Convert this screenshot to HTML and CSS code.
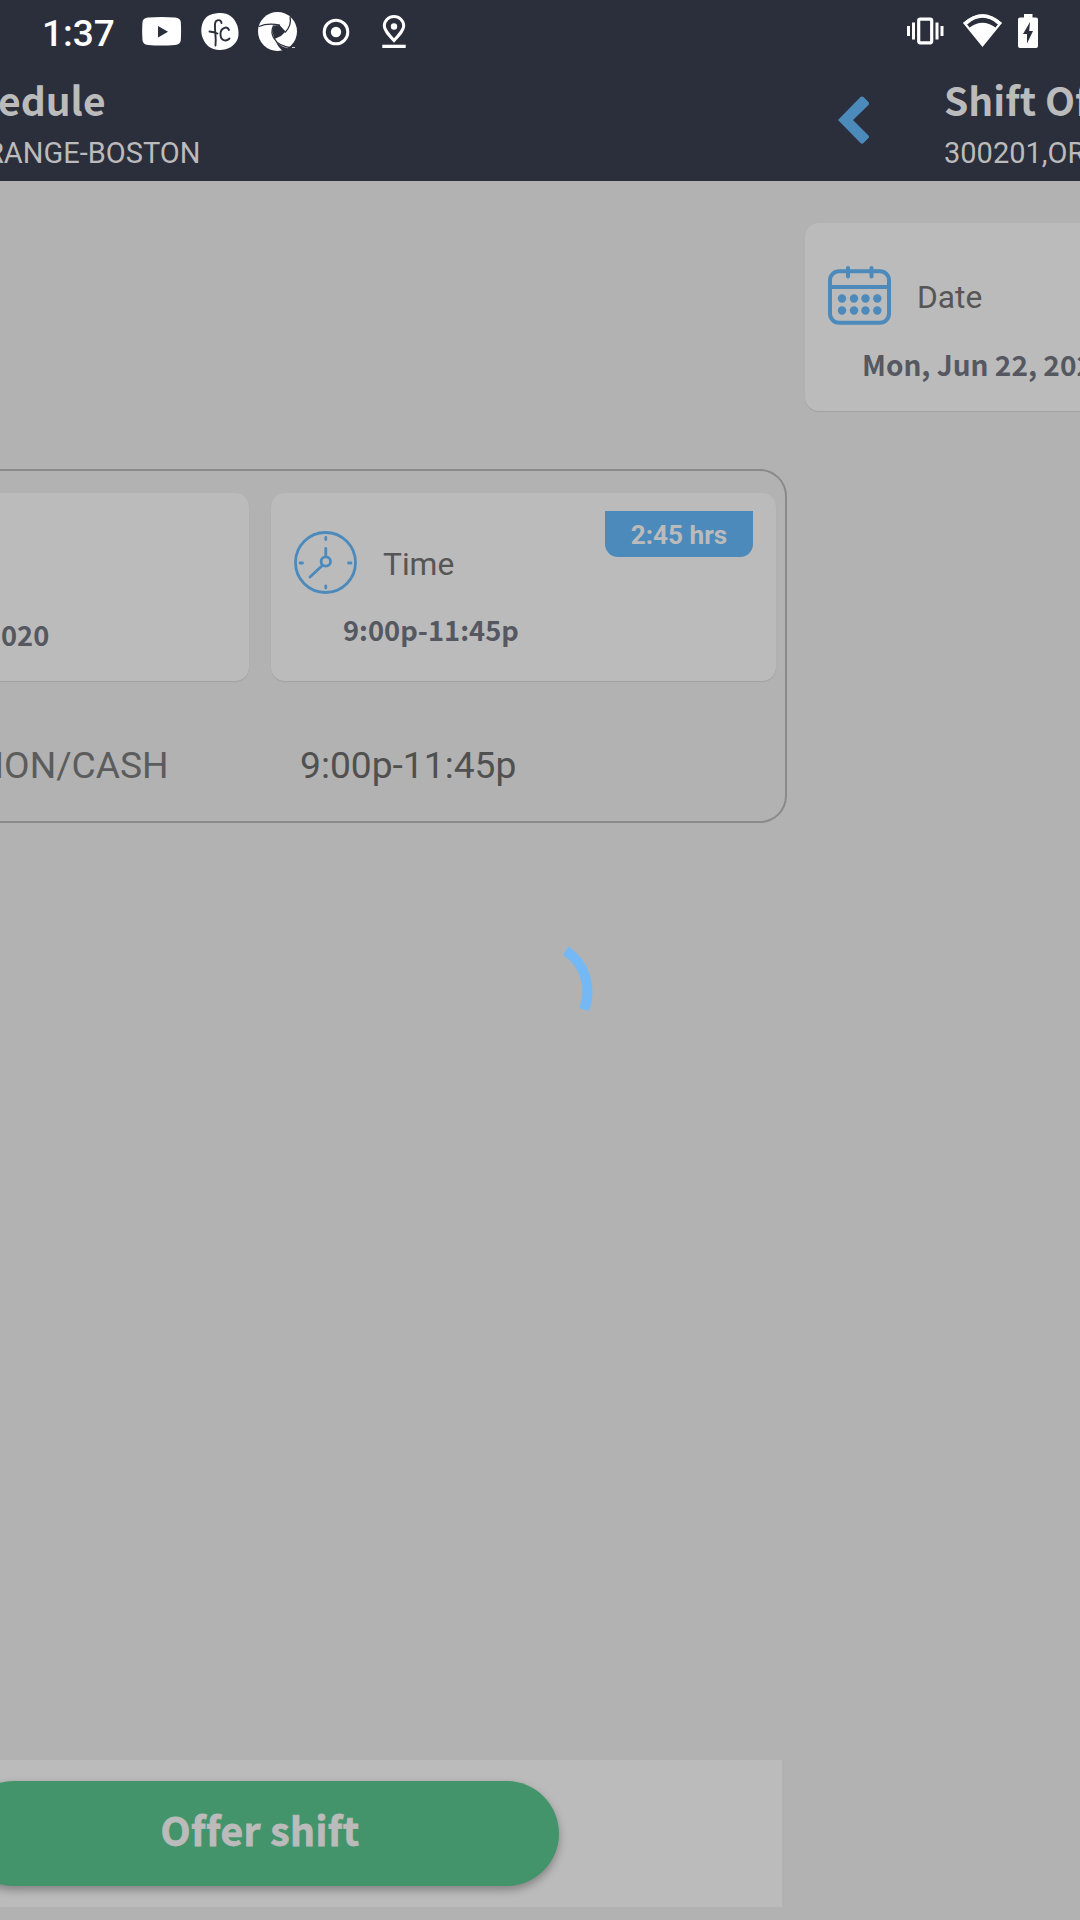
FILE: index.html
```html
<!DOCTYPE html>
<html lang="en">
<head>
<meta charset="utf-8">
<title>Shift Offer</title>
<link rel="stylesheet" href="styles.css">
</head>
<body>
<div class="status">
  <span class="clock">1:37</span>
  <div class="notifications">
    <svg viewBox="0 0 40 40"><path fill="#fff" fill-rule="evenodd" d="M6 5.500Q19.500 4.500 33 5.500Q38.500 6 38.800 10Q39.400 19 38.800 28Q38.500 32.500 33 33Q19.500 34 6 33Q.8 32.500.5 28Q-.2 19 .5 10Q.8 6 6 5.500zM16 14v11.500l10-5.700z"/></svg>
    <svg viewBox="0 0 40 40"><path fill="#fff" d="M17 1.200C27 0 34 4 37.500 14C40 24 38 30 31 35C24 39 14 39 8 34C2 28 0 20 2 13C4 6 8 2 17 1.200z"/><g fill="none" stroke="#2b2e3b" stroke-width="1.900" stroke-linecap="round"><path d="M21.500 11C21 7 15.500 7 15 12C14.500 19 16.500 25 15.500 33.500M9.500 19.500Q14 20 17.500 21.500M29 18C27 13.500 20.500 16 20.500 22C20.500 29 26 30 29.500 26.500"/></g></svg>
    <svg viewBox="0 0 40 40"><circle cx="19.500" cy="19.500" r="19.500" fill="#fff"/><path fill="#2b2e3b" d="M15.500 13.500L21.500 13L27.500 19.500L23 24L16.500 27L14.500 20z"/><g fill="none" stroke="#2b2e3b" stroke-width="1.300"><path d="M1 14.500Q10 10.500 22 13.200M32 5Q34 13 27 20.500M16.200 26.500Q20 34 34 36M16.500 27Q12 21 15.500 13.500"/></g><path fill="#2b2e3b" d="M17.500 28.500Q22 35 30 36L26 39.500Q20 36 17.500 28.500z"/><path stroke="#ccc" stroke-width="1" d="M34 35.500h3"/></svg>
    <svg viewBox="0 0 40 40"><circle cx="20" cy="20" r="11.800" fill="none" stroke="#fff" stroke-width="3"/><circle cx="20" cy="20" r="5.200" fill="#fff"/></svg>
    <svg viewBox="0 0 40 40"><path fill="none" stroke="#fff" stroke-width="3" d="M20 28.500C14 22 10.300 18 10.300 14A9.700 9.500 0 0 1 29.700 14C29.700 18 26 22 20 28.500z"/><circle cx="20" cy="14.500" r="3.200" fill="#fff"/><path fill="#fff" d="M8.300 32.700h23.400v3.300H8.300z"/></svg>
  </div>
  <div class="system">
    <svg class="vibrate" viewBox="0 0 40 40"><rect x="13.700" y="7.200" width="13" height="23.600" rx="1.500" fill="none" stroke="#fff" stroke-width="3.200"/><path fill="#fff" d="M2 14h3v10H2zM7 10.500h3v17H7zM30.500 10.500h3v17h-3zM35.500 14h3v10h-3z"/></svg>
    <svg class="wifi" viewBox="0 0 40 40"><path fill="#fff" d="M0 11Q19.500-6.500 39 11L19.500 35z"/><path fill="#2b2e3b" d="M3.800 12Q19.500-2 35.200 12L32.500 15.500Q19.500 6 6.500 15.500z"/><path fill="#fff" d="M0 11Q19.500-6.500 39 11L34.500 12.200Q19.500-.5 4.500 12.200z"/></svg>
    <svg class="battery" viewBox="0 0 20 34"><path fill="#fff" fill-rule="evenodd" d="M6 0h8.500v3.500H18q2 0 2 2V32q0 2-2 2H2q-2 0-2-2V5.500q0-2 2-2h4zM12 8L5 20h4v9.500L15 17h-3.800z"/></svg>
  </div>
</div>

<div class="screens">
  <section class="pane">
    <header class="bar bar-left">
      <h1 class="title">edule</h1>
      <p class="subtitle left-store">RANGE-BOSTON</p>
    </header>
    <main class="schedule">
      <div class="shift">
        <div class="cards">
          <article class="card card-date"><p class="value">020</p></article>
          <article class="card card-time">
            <div class="card-head">
              <svg class="icon" viewBox="0 0 63 63" fill="none" stroke="#4c8abc" stroke-width="2.800" stroke-linecap="round"><circle cx="31.500" cy="31.500" r="30"/><circle cx="31.800" cy="30.500" r="4.700"/><path d="M31.800 17.500v8M28.300 34.500L16 46M31.800 6.500v2M31.800 55v2M6 32h2.500M54.500 32H57"/></svg>
              <span class="label">Time</span>
              <span class="badge">2:45 hrs</span>
            </div>
            <p class="value">9:00p-11:45p</p>
          </article>
        </div>
        <div class="row"><span class="job"><span class="job-text">ION/CASH</span></span><span class="hours-range">9:00p-11:45p</span></div>
      </div>
    </main>
    <footer class="actions"><button class="offer">Offer shift</button></footer>
  </section>

  <section class="pane">
    <header class="bar bar-right">
      <svg class="back" viewBox="0 0 31 48"><path fill="#4c8abc" d="M0 24L22.500 1Q24 0 25.500 1L30.500 6Q31.500 7.500 30.500 9L15 24L30.500 39.500Q31.500 41 30.500 42L25.500 47Q24 48.500 22.500 47z"/></svg>
      <div class="heading">
        <h1 class="title">Shift Of</h1>
        <p class="subtitle">300201,OR</p>
      </div>
    </header>
    <main class="detail">
      <article class="card card-detail">
        <div class="card-head">
          <svg class="icon" viewBox="0 0 63 63" fill="none" stroke="#4c8abc" stroke-width="4" stroke-linecap="round"><rect x="2" y="6.300" width="59" height="51.500" rx="9"/><path d="M2 22h59M20 3v8.500M43.500 3v8.500"/><g fill="#4c8abc" stroke="none"><circle cx="14" cy="33.500" r="4.200"/><circle cx="26" cy="33.500" r="4.200"/><circle cx="37.500" cy="33.500" r="4.200"/><circle cx="49.300" cy="33.500" r="4.200"/><circle cx="14" cy="45.500" r="4.200"/><circle cx="26" cy="45.500" r="4.200"/><circle cx="37.500" cy="45.500" r="4.200"/><circle cx="49.300" cy="45.500" r="4.200"/></g></svg>
          <span class="label">Date</span>
        </div>
        <p class="value">Mon, Jun 22, 202</p>
      </article>
    </main>
  </section>
</div>

<svg class="spinner" viewBox="0 0 120 120"><path fill="none" stroke="#74b9f5" stroke-width="10" d="M85.800 30.700A49 49 0 0 1 104 89.500"/></svg>
</body>
</html>
```
FILE: styles.css
```css
* { box-sizing: border-box; }
body {
  margin: 0;
  width: 1080px;
  height: 1920px;
  overflow: hidden;
  display: flex;
  flex-direction: column;
  background: #b2b2b2;
  font-family: Roboto, sans-serif;
  position: relative;
}
h1, p { margin: 0; white-space: nowrap; }

.status {
  height: 64px;
  flex: none;
  display: flex;
  align-items: flex-start;
  background: #2b2e3b;
  padding: 12px 42px 0 42px;
}
.clock {
  width: 100px;
  font-size: 37px;
  font-weight: 500;
  line-height: 43px;
  color: #fff;
}
.notifications { display: flex; gap: 18px; }
.notifications svg, .vibrate, .wifi { width: 40px; height: 40px; display: block; }
.system { display: flex; margin-left: auto; }
.wifi { margin: 0 15px 0 18px; }
.battery { width: 20px; height: 34px; margin-top: 2px; }

.screens {
  flex: 1;
  display: grid;
  grid-template-columns: 787px 293px;
}
.pane { display: flex; flex-direction: column; overflow: hidden; }
.bar {
  height: 117px;
  flex: none;
  background: #2b2e3b;
  color: #bbb;
  padding-top: 11px;
}
.bar-right { display: flex; padding-left: 51px; }
.back { width: 31px; height: 48px; margin: 21px 75px 0 0; flex: none; }
.title {
  font: 600 39px/48px "Noto Sans CJK SC", sans-serif;
  margin-bottom: 12px;
}
.subtitle { font-size: 29px; line-height: 36px; }
.bar-left .title { margin-left: -2px; }
.left-store { margin-left: -14px; }

.schedule { flex: 1; padding-top: 288px; }
.shift {
  height: 354px;
  border: 2px solid #8a8a8a;
  border-left: 0;
  border-radius: 0 27px 27px 0;
  padding-top: 22px;
}
.cards { display: flex; gap: 22px; }
.card {
  height: 188px;
  background: #bbb;
  border-radius: 14px;
  box-shadow: 0 1px 1px rgba(0, 0, 0, .1);
}
.card-date {
  width: 249px;
  border-radius: 0 14px 14px 0;
  padding-top: 121px;
}
.card-time { width: 505px; padding: 18px 23px; }
.card-head { display: flex; align-items: flex-start; }
.icon { width: 63px; height: 63px; flex: none; }
.label {
  font-size: 31.7px;
  line-height: 40px;
  color: #565656;
  margin-left: 26px;
}
.value {
  font: 600 28px/40px "Noto Sans CJK SC", sans-serif;
  color: #555861;
}
.card-date .value { margin-left: 1px; font-size: 27.3px; }
.card-time .icon { margin-top: 20px; }
.card-time .label { margin-top: 34px; }
.card-time .value { margin: 14px 0 0 49px; font-size: 27.3px; }
.badge {
  width: 148px;
  height: 46px;
  margin-left: auto;
  border-radius: 0 0 13px 13px;
  background: #4c8abc;
  color: #bbb;
  font-size: 26.2px;
  font-weight: 700;
  line-height: 48px;
  text-align: center;
}
.card-time .card-head { height: 84px; }
.row {
  display: flex;
  margin-top: 62px;
  font-size: 37.2px;
  line-height: 44px;
  color: #505050;
}
.job { width: 300px; color: #5c5c5c; }
.job-text { margin-left: -6px; }

.actions {
  width: 782px;
  height: 147px;
  margin-bottom: 13px;
  background: #bbb;
  padding-top: 21px;
}
.offer {
  display: block;
  width: 598px;
  height: 105px;
  margin-left: -39px;
  padding: 0 0 8px;
  border: 0;
  border-radius: 53px;
  background: #43946a;
  color: #bbb;
  font: 700 39px/97px "Noto Sans CJK SC", sans-serif;
  letter-spacing: .45px;
  -webkit-text-stroke: .8px #bbb;
  box-shadow: 0 4px 8px rgba(0, 0, 0, .3);
}

.detail { padding: 42px 0 0 18px; }
.card-detail {
  border-radius: 14px 0 0 14px;
  padding: 42px 0 0 23px;
}
.card-detail .label { margin-top: 13px; }
.card-detail .value { margin: 16px 0 0 34px; }

.spinner {
  position: absolute;
  left: 480px;
  top: 920px;
  width: 120px;
  height: 120px;
}
```
